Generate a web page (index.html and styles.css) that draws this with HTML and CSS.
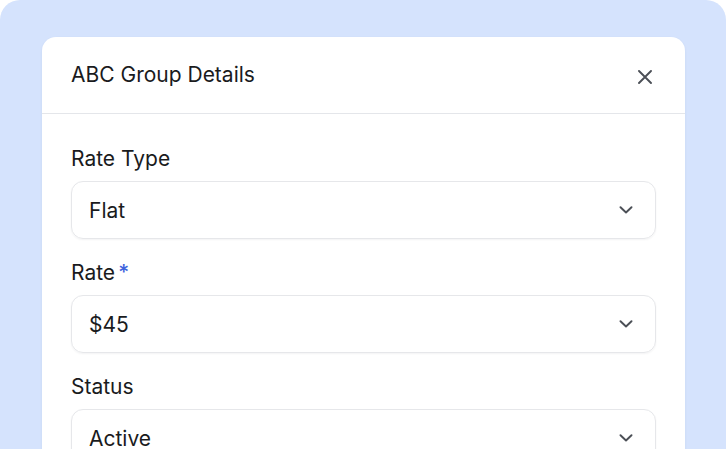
FILE: index.html
```html
<!DOCTYPE html>
<html>
<head>
<meta charset="utf-8">
<link rel="stylesheet" href="styles.css">
</head>
<body>
<div class="backdrop">
  <div class="card">
    <div class="card-header">
      <h2 class="title">ABC Group Details</h2>
      <button class="close" aria-label="Close">
        <svg width="14" height="14" viewBox="0 0 14 14"><path d="M1 1L13 13M13 1L1 13" stroke="#4b4f56" stroke-width="1.9" stroke-linecap="round"/></svg>
      </button>
    </div>
    <div class="card-body">
      <div class="field">
        <label class="label">Rate Type</label>
        <div class="select"><span>Flat</span>
          <svg class="chev" width="14" height="8" viewBox="0 0 14 8"><path d="M1.5 1.2L7 6.5L12.5 1.2" fill="none" stroke="#4b4f56" stroke-width="1.9" stroke-linecap="round" stroke-linejoin="round"/></svg>
        </div>
      </div>
      <div class="field">
        <label class="label">Rate<span class="req">*</span></label>
        <div class="select"><span>$45</span>
          <svg class="chev" width="14" height="8" viewBox="0 0 14 8"><path d="M1.5 1.2L7 6.5L12.5 1.2" fill="none" stroke="#4b4f56" stroke-width="1.9" stroke-linecap="round" stroke-linejoin="round"/></svg>
        </div>
      </div>
      <div class="field">
        <label class="label">Status</label>
        <div class="select"><span>Active</span>
          <svg class="chev" width="14" height="8" viewBox="0 0 14 8"><path d="M1.5 1.2L7 6.5L12.5 1.2" fill="none" stroke="#4b4f56" stroke-width="1.9" stroke-linecap="round" stroke-linejoin="round"/></svg>
        </div>
      </div>
    </div>
  </div>
</div>
</body>
</html>
```
FILE: styles.css
```css
html, body {
  margin: 0;
  padding: 0;
  background: #ffffff;
  height: 449px;
  overflow: hidden;
}
body {
  font-family: Inter, "Noto Sans", sans-serif;
  color: #1a1b1d;
}
.backdrop {
  background: #d5e3fd;
  border-radius: 20px 20px 0 0;
  padding: 37px 41px 0 42px;
  height: 600px;
  box-sizing: border-box;
}
.card {
  background: #ffffff;
  border-radius: 14px;
  height: 560px;
  box-shadow: 0 1px 3px rgba(30, 50, 90, 0.06);
}
.card-header {
  height: 76px;
  display: flex;
  align-items: center;
  justify-content: space-between;
  padding: 0 33px 0 29px;
  border-bottom: 1px solid #e4e6ea;
}
.title {
  margin: 0;
  font-size: 21px;
  line-height: 26px;
  font-weight: 400;
  color: #1a1b1d;
}
.close {
  border: 0;
  background: none;
  padding: 0;
  width: 14px;
  height: 14px;
  display: flex;
  margin-top: 3px;
}
.card-body {
  padding: 33px 29px 0 29px;
  display: flex;
  flex-direction: column;
  gap: 22px;
}
.field {
  display: flex;
  flex-direction: column;
  gap: 10px;
}
.label {
  font-size: 21px;
  line-height: 24px;
  color: #1a1b1d;
}
.req {
  color: #3d63dd;
  margin-left: 3px;
  font-weight: 500;
}
.select {
  height: 58px;
  box-sizing: border-box;
  border: 1px solid #e6e7ea;
  border-radius: 12px;
  display: flex;
  align-items: center;
  justify-content: space-between;
  padding: 0 22px 0 17px;
  font-size: 21px;
  color: #1a1b1d;
  box-shadow: 0 1px 2px rgba(16, 24, 40, 0.05);
}
.chev {
  display: block;
}
```
